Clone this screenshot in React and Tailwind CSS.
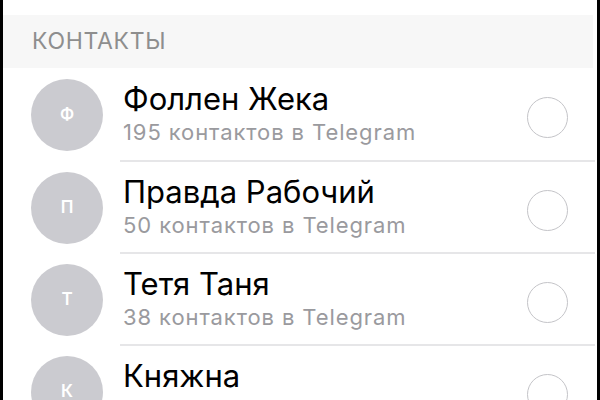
import React from 'react';

const contacts = [
  { letter: 'Ф', name: 'Фоллен Жека', count: 195, h: 'h-[94px]' },
  { letter: 'П', name: 'Правда Рабочий', count: 50, h: 'h-[92px]' },
  { letter: 'Т', name: 'Тетя Таня', count: 38, h: 'h-[92px]' },
  { letter: 'К', name: 'Княжна', count: 12, h: 'h-[92px]' },
];

const App = () => {
  return (
    <div
      className="w-[600px] h-[400px] overflow-hidden bg-white border-l-[3px] border-r-[3px] border-black"
      style={{ fontFamily: 'Inter, "Noto Sans", sans-serif' }}
    >
      <div className="h-[15px] bg-white" />
      {/* section header */}
      <div className="h-[53px] bg-[#f7f7f7] mr-[4px] flex items-center pl-[29px]">
        <span className="text-[23px] tracking-[0.7px] text-[#8e8e8e]">КОНТАКТЫ</span>
      </div>

      {contacts.map((c, i) => (
        <div key={i} className={`${c.h} flex`}>
          <div className="h-full flex items-center shrink-0">
            <div className="w-[72px] h-[72px] ml-[28px] rounded-full bg-[#cbcbd0] flex items-center justify-center">
              <span className="text-white text-[17px] font-semibold">{c.letter}</span>
            </div>
          </div>
          <div className="flex-1 h-full flex items-center ml-[17px] pl-[3px] mr-[2px] border-b-2 border-[#e6e6e8]">
            <div className="flex-1 flex flex-col pt-[2px]">
              <span className="text-[31px] leading-[34px] text-black">{c.name}</span>
              <span className="text-[22px] leading-[33px] tracking-[0.9px] text-[#9a9a9e]">{c.count} контактов в Telegram</span>
            </div>
            <div className="w-[41px] h-[41px] rounded-full border-[1.5px] border-[#c4c4c8] mr-[27px] mt-[6px]" />
          </div>
        </div>
      ))}
    </div>
  );
};

export default App;
